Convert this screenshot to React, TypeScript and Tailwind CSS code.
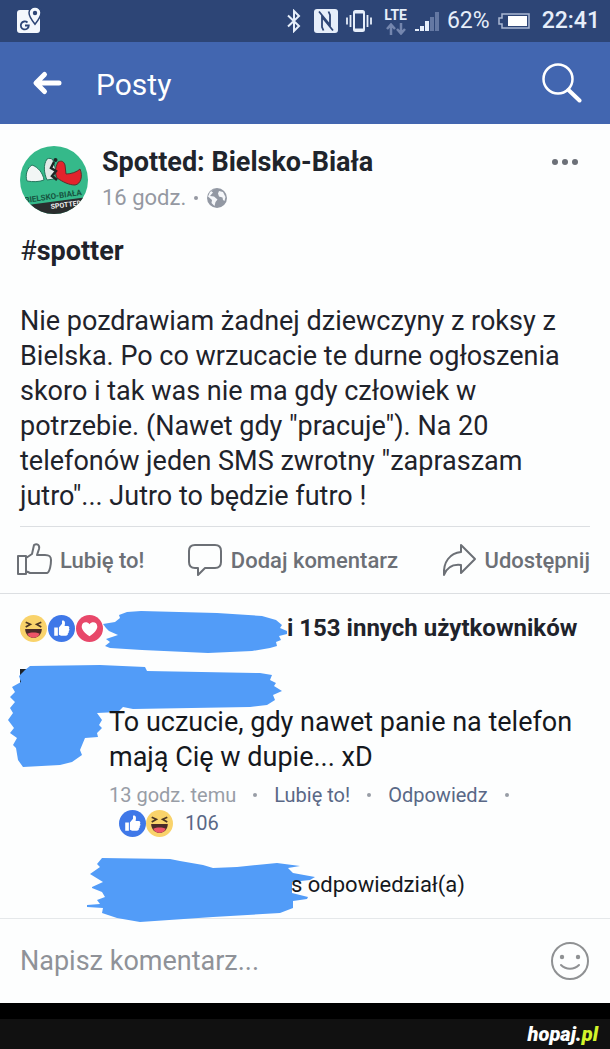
import type { ReactNode } from 'react';

const postText =
  'Nie pozdrawiam żadnej dziewczyny z roksy z Bielska. Po co wrzucacie te durne ogłoszenia skoro i tak was nie ma gdy człowiek w potrzebie. (Nawet gdy "pracuje"). Na 20 telefonów jeden SMS zwrotny "zapraszam jutro"... Jutro to będzie futro !';

function StatusBar() {
  return (
    <div className="flex h-[42px] items-center justify-between bg-[#2d4576] pr-[10px] pl-4 text-[#e6eefa]">
      <svg className="size-7" viewBox="0 0 28 28" aria-hidden="true">
        <rect x="1" y="3" width="23" height="23" rx="3" fill="#f4f8fd" />
        <path
          d="M19 0c-3.400 0-6 2.500-6 5.800 0 4 6 11.500 6 11.500s6-7.500 6-11.500C25 2.500 22.400 0 19 0z"
          fill="#f4f8fd"
          stroke="#2d4576"
          strokeWidth="1.500"
        />
        <circle cx="19" cy="6" r="2.200" fill="#2d4576" />
        <path
          d="M11.500 15.500a4 4 0 1 0 1.300 3H9"
          fill="none"
          stroke="#2d4576"
          strokeWidth="1.800"
        />
      </svg>
      <div className="flex items-center">
        <svg className="h-6 w-4" viewBox="0 0 16 24" aria-hidden="true">
          <path
            d="M2 6.500 13 17l-5 5V2l5 5L2 17.500"
            fill="none"
            stroke="currentColor"
            strokeWidth="2"
          />
        </svg>
        <svg className="ml-3 size-6" viewBox="0 0 24 24" aria-hidden="true">
          <rect width="24" height="24" rx="3" fill="currentColor" />
          <path
            d="M5 2.500 16 16V6l-1.500-3.500M19 21.500 8 8v10l1.500 3.500"
            fill="none"
            stroke="#2d4576"
            strokeWidth="1.800"
          />
        </svg>
        <svg className="ml-2 h-6 w-[26px]" viewBox="0 0 26 24" aria-hidden="true">
          <rect x="8" y="2" width="10" height="20" rx="1.500" fill="none" stroke="currentColor" strokeWidth="2" />
          <path d="M8 3.500h10M8 20.500h10" stroke="currentColor" strokeWidth="2" />
          <path d="M4.500 6v12M21.500 6v12M1 8.500v7M25 8.500v7" stroke="currentColor" strokeWidth="1.800" />
        </svg>
        <div className="ml-3 flex flex-col items-center">
          <span className="text-sm leading-4 font-bold">LTE</span>
          <svg className="h-3 w-5" viewBox="0 0 20 12" aria-hidden="true">
            <path
              d="M5 12V2M1 6l4-4.500L9 6M15 0v10M11 6l4 4.500L19 6"
              fill="none"
              stroke="#7486ae"
              strokeWidth="2.500"
            />
          </svg>
        </div>
        <svg className="ml-2 h-5 w-6" viewBox="0 0 24 20" aria-hidden="true">
          <path d="M0 18h4v2H0zM5 15h4v5H5zM10 10h4v10h-4z" fill="currentColor" />
          <path d="M15 6h4v14h-4zM20 1h4v19h-4z" fill="#6478a3" />
        </svg>
        <span className="ml-2 text-[23px]">62%</span>
        <svg className="ml-2 h-4 w-8" viewBox="0 0 32 16" aria-hidden="true">
          <path
            d="M4 1h27v14H4v-4H1V5h3z"
            fill="none"
            stroke="#a9b7d2"
            strokeWidth="1.500"
          />
          <path d="M10 3h19v10H10z" fill="#fff" />
        </svg>
        <span className="ml-3 text-[23px] font-medium">22:41</span>
      </div>
    </div>
  );
}

function AppBar() {
  return (
    <header className="flex h-[82px] items-center bg-[#4266b0] px-7 text-white">
      <button type="button" aria-label="Wstecz" className="mr-7 ml-1">
        <svg className="h-7 w-9" viewBox="0 0 36 28" aria-hidden="true">
          <path
            d="M12.500 5.500 4 14l8.500 8.500M5 14h22"
            fill="none"
            stroke="currentColor"
            strokeWidth="5"
            strokeLinecap="round"
            strokeLinejoin="round"
          />
        </svg>
      </button>
      <h1 className="flex-1 pt-1 text-3xl">Posty</h1>
      <button type="button" aria-label="Szukaj">
        <svg className="size-10" viewBox="0 0 40 40" aria-hidden="true">
          <circle cx="16" cy="16" r="14.500" fill="none" stroke="currentColor" strokeWidth="2.500" />
          <path d="m26.500 27 11 10.500" stroke="currentColor" strokeWidth="4" strokeLinecap="round" />
        </svg>
      </button>
    </header>
  );
}

function PageAvatar() {
  return (
    <svg className="size-[68px] shrink-0" viewBox="0 0 68 68" aria-hidden="true">
      <clipPath id="avatar">
        <circle cx="34" cy="34" r="34" />
      </clipPath>
      <g clipPath="url(#avatar)">
        <path d="M0 0h68v68H0z" fill="#35b98a" />
        <path d="M0 60 68 51v17H0z" fill="#2a2d2e" />
        <path
          d="M12 19c-5 3-7 10-5 16 6 1 12 1 17-1-1-7-6-13-12-15z"
          fill="#f2f6f5"
          stroke="#24765d"
          strokeWidth="1"
        />
        <path
          d="M27 13c-4 6-3 14 0 21l7-1 2-8-3-11c-2-2-4-2-6-1z"
          fill="#e3eae8"
          stroke="#24765d"
          strokeWidth="1"
        />
        <path
          d="M38 16c4-2 6 0 7 3l1 9c5 0 11-2 14-5 3 7 1 15-5 16-6 0-12-3-18-7-2-5-2-10 1-16z"
          fill="#e3232c"
          stroke="#5c2f2c"
          strokeWidth="1"
        />
        <path d="m34 16-3 6 5 3-4 5 5 4" fill="none" stroke="#1f2725" strokeWidth="2.500" />
        <circle cx="35.500" cy="14" r="2" fill="#1f2725" />
        <text x="5" y="57" fontSize="8" fontWeight="700" fill="#17543f" transform="rotate(-8 5 57)">
          BIELSKO-BIAŁA
        </text>
        <text x="31" y="63" fontSize="7" fontWeight="700" fill="#f0f0f0" transform="rotate(-7 31 63)">
          SPOTTED
        </text>
      </g>
    </svg>
  );
}

function LikeBadge({ className }: { className: string }) {
  return (
    <svg className={className} viewBox="0 0 26 26" aria-hidden="true">
      <circle cx="13" cy="13" r="13" fill="#3f78e8" />
      <path
        d="M6 12h3.500v8H6zM10.500 12l3-3.500V5.500c2.500-.8 3.500 1.500 2.500 5H19c1.500 0 2 1.500 1.200 2.500.8 1 .5 2-.3 2.500.4 1 0 2-.8 2.300.2 1.200-.5 2.200-2 2.200h-4.500l-2.100-1z"
        fill="#fff"
      />
    </svg>
  );
}

function HahaBadge({ className }: { className: string }) {
  return (
    <svg className={className} viewBox="0 0 26 26" aria-hidden="true">
      <circle cx="13" cy="13" r="13" fill="#f9d36b" />
      <path
        d="m5.500 7 4.500 2-4.500 2.500M20.500 7 16 9l4.500 2.500"
        fill="none"
        stroke="#4a3524"
        strokeWidth="1.600"
      />
      <path d="M5 13.500h16c0 4.500-3 8.500-8 8.500s-8-4-8-8.500z" fill="#4a2a28" />
      <path d="M7 18c3-1.500 9-1.500 12 0-1 2.500-3 4-6 4s-5-1.500-6-4z" fill="#ee5568" />
    </svg>
  );
}

function LoveBadge({ className }: { className: string }) {
  return (
    <svg className={className} viewBox="0 0 26 26" aria-hidden="true">
      <circle cx="13" cy="13" r="13" fill="#e8486a" />
      <path
        d="M13 20.500C8 17 5.500 14 5.500 11c0-4 5-5.500 7.500-2 2.500-3.500 7.500-2 7.500 2 0 3-2.500 6-7.500 9.500z"
        fill="#fff"
      />
    </svg>
  );
}

function PostAction({ label, children }: { label: string; children: ReactNode }) {
  return (
    <button type="button" className="flex items-center gap-2 text-[22px] font-medium text-[#6c7076]">
      <svg
        className="size-9"
        viewBox="0 0 36 36"
        fill="none"
        stroke="currentColor"
        strokeWidth="2"
        strokeLinejoin="round"
        aria-hidden="true"
      >
        {children}
      </svg>
      {label}
    </button>
  );
}

function Post() {
  return (
    <article>
      <div className="px-5 pt-[22px]">
        <div className="flex gap-[14px]">
          <PageAvatar />
          <div className="flex-1">
            <h2 className="text-[27px] leading-8 font-bold text-[#20242b]">Spotted: Bielsko-Biała</h2>
            <div className="mt-1 flex items-center gap-2 text-[22px] leading-8 text-[#9599a2]">
              16 godz.
              <span className="size-1 rounded-full bg-current" />
              <svg className="size-[22px]" viewBox="0 0 22 22" aria-hidden="true">
                <circle cx="11" cy="11" r="10" fill="#9298a3" />
                <path
                  d="M9 1.500 5 4l2 1.500L4 9l4 .5 3.500 3-2 2.500-1 4-3-3 .5-3L2 9.500 4 5zM13 4l4 1 2.500 5-1 4-1.500-1-.5-2.500-3.500-1-1-3z"
                  fill="#f5f7fa"
                />
              </svg>
            </div>
          </div>
          <button type="button" aria-label="Więcej" className="flex h-8 items-center gap-1 pr-3">
            <span className="size-[6px] rounded-full bg-[#6c7078]" />
            <span className="size-[6px] rounded-full bg-[#6c7078]" />
            <span className="size-[6px] rounded-full bg-[#6c7078]" />
          </button>
        </div>
        <div className="mt-5 text-[27px] leading-[35px] text-[#1f232b]">
          <p>
            #<b>spotter</b>
          </p>
          <p className="mt-[35px]">{postText}</p>
        </div>
      </div>
      <div className="mx-5 mt-3 border-t border-[#dcdfe2]">
        <div className="-ml-1 flex h-[66px] items-center justify-between">
          <PostAction label="Lubię to!">
            <path d="M2 14h8v18H2zM10 16l6-4 2-9c3-2 6 0 5 4l-2 6h8c4 0 6 1 6 5s-1 12-4 13H14l-4-2" />
          </PostAction>
          <PostAction label="Dodaj komentarz">
            <path d="M8 3h20c4 0 6 2 6 6v11c0 4-2 6-6 6H18l-7 7v-7H8c-4 0-6-2-6-6V9c0-4 2-6 6-6z" />
          </PostAction>
          <PostAction label="Udostępnij">
            <path d="M20 3 34 17 20 31v-8C12 22 6 25 3 33 2 20 9 11 20 10z" />
          </PostAction>
        </div>
      </div>
    </article>
  );
}

function Comment() {
  return (
    <div className="relative pt-[43px] pl-[109px]">
      <svg
        className="absolute top-[3px] left-2 h-[104px] w-[274px]"
        viewBox="0 0 274 104"
        aria-hidden="true"
      >
        <path d="M12 4h10v14H12z" fill="#1d2228" />
        <path
          d="M22 1 92 0 137 2 139 6 252 8 264 10 262 15 268 18 266 21 274 26 265 30 267 35 259 40 242 42 125 44 115 42 110 47 89 48 94 55 91 60 94 63 89 68 90 72 77 73 72 85 74 90 64 97 52 100 15 102 10 95 8 83 5 80 9 73 2 68 6 63 0 55 5 48 2 43 7 37 2 32 7 27 4 22 13 17 11 11 17 5z"
          fill="#529cf8"
        />
      </svg>
      <p className="relative text-[27px] leading-[35px] text-[#15181d]">
        To uczucie, gdy nawet panie na telefon mają Cię w dupie... xD
      </p>
      <div className="mt-1 flex items-center gap-[17px] text-[20px] leading-8 text-[#596886]">
        <span className="text-[#989da6]">13 godz. temu</span>
        <span className="size-1 rounded-full bg-[#989da6]" />
        <button type="button">Lubię to!</button>
        <span className="size-1 rounded-full bg-[#989da6]" />
        <button type="button">Odpowiedz</button>
        <span className="size-1 rounded-full bg-[#989da6]" />
      </div>
      <div className="flex h-6 items-center pl-[10px] text-[20px] text-[#596886]">
        <LikeBadge className="size-[27px]" />
        <HahaBadge className="size-[27px]" />
        <span className="ml-3">106</span>
      </div>
    </div>
  );
}

function Replies() {
  return (
    <div className="relative flex h-[83px] items-center pt-4 pl-[291px] text-[22px] text-[#15181d]">
      <svg
        className="absolute top-[23px] left-[87px] h-16 w-[228px]"
        viewBox="0 0 228 64"
        aria-hidden="true"
      >
        <path
          d="M15 0 83 1 93 3 116 7 126 10 150 9 190 5 213 8 201 10 206 15 228 19 223 22 205 24 205 35 221 39 220 41 206 43 206 50 193 55 126 59 53 64 30 60 15 55 16 50 0 49 0 47 13 46 10 42 18 39 15 34 5 30 5 29 16 24 3 16 13 9 10 6z"
          fill="#529cf8"
        />
      </svg>
      <span className="relative">s odpowiedział(a)</span>
    </div>
  );
}

export default function App() {
  return (
    <div className="flex min-h-screen flex-col bg-black font-[Roboto,sans-serif]">
      <StatusBar />
      <AppBar />
      <main className="flex-1 bg-[#fdfefe]">
        <Post />
        <section className="border-t border-[#dcdfe2]">
          <div className="flex h-[68px] items-center pl-5">
            <div className="flex gap-px">
              <HahaBadge className="size-[27px]" />
              <LikeBadge className="size-[27px]" />
              <LoveBadge className="size-[27px]" />
            </div>
            <svg className="mt-2 h-[42px] w-[184px]" viewBox="0 0 184 42" aria-hidden="true">
              <path
                d="m0 13 12-2 5-4-1-3 8-3 14-1 76 2 45 3 14 4 6 5-2 3 7 3v3l-8 2 2 4-5 2 1 4-7 2-18 3-44 2-66-3-32-2-5-2 5-4-4-3 12-4-9-4-3-3z"
                fill="#529cf8"
              />
            </svg>
            <span className="text-2xl font-bold text-[#1f232b]">i 153 innych użytkowników</span>
          </div>
          <Comment />
          <Replies />
        </section>
        <form className="flex h-[85px] items-center border-t border-[#e5e8ea] px-5">
          <input
            type="text"
            aria-label="Napisz komentarz"
            placeholder="Napisz komentarz..."
            className="min-w-0 flex-1 bg-transparent text-[27px] outline-none placeholder:text-[#8f9298]"
          />
          <button type="button" aria-label="Emotikony" className="text-[#8f9193]">
            <svg className="size-10" viewBox="0 0 40 40" aria-hidden="true">
              <circle cx="20" cy="20" r="18" fill="none" stroke="currentColor" strokeWidth="2" />
              <circle cx="12" cy="16" r="2.200" fill="currentColor" />
              <circle cx="28" cy="16" r="2.200" fill="currentColor" />
              <path
                d="M11 24c5 5 13 5 18 0"
                fill="none"
                stroke="currentColor"
                strokeWidth="2"
                strokeLinecap="round"
              />
            </svg>
          </button>
        </form>
      </main>
      <footer className="mt-4 flex h-[30px] items-center justify-end bg-[#111] pr-3">
        <a href="#" className="text-xl leading-6 font-black text-white italic">
          hopaj.<span className="text-[#d3f52b]">pl</span>
        </a>
      </footer>
    </div>
  );
}
